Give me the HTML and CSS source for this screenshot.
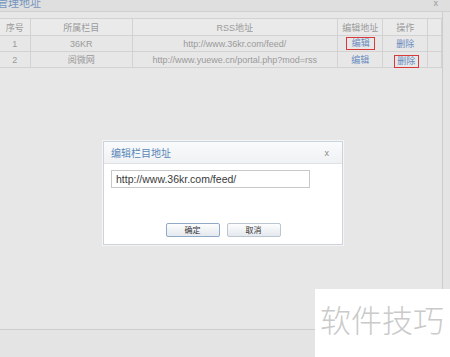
FILE: index.html
```html
<!DOCTYPE html>
<html lang="zh-CN">
<head>
    <meta charset="UTF-8">
    <title>管理地址</title>
    <link rel="stylesheet" href="styles.css">
</head>
<body>
    <div class="panel-head">
        <span class="panel-title">管理地址</span>
        <span class="panel-close">x</span>
    </div>

    <div class="panel-body">
        <table class="grid">
            <tr>
                <th class="c-no">序号</th>
                <th class="c-cat">所属栏目</th>
                <th class="c-url">RSS地址</th>
                <th class="c-edit">编辑地址</th>
                <th class="c-op">操作</th>
                <th class="c-pad"></th>
            </tr>
            <tr>
                <td>1</td>
                <td>36KR</td>
                <td>http://www.36kr.com/feed/</td>
                <td><a class="link mark">编辑</a></td>
                <td><a class="link">删除</a></td>
                <td></td>
            </tr>
            <tr>
                <td>2</td>
                <td>阅微网</td>
                <td>http://www.yuewe.cn/portal.php?mod=rss</td>
                <td><a class="link">编辑</a></td>
                <td><a class="link mark-low">删除</a></td>
                <td></td>
            </tr>
        </table>
    </div>

    <!-- edit dialog over the list -->
    <div class="dialog">
        <div class="dialog-head">
            <span class="dialog-title">编辑栏目地址</span>
            <span class="dialog-close">x</span>
        </div>
        <div class="dialog-body">
            <input type="text" class="url-input" value="http://www.36kr.com/feed/">
            <div class="dialog-buttons">
                <button class="btn btn-ok">确定</button>
                <button class="btn">取消</button>
            </div>
        </div>
    </div>

    <div class="watermark">软件技巧</div>
</body>
</html>
```

FILE: styles.css
```css
body {
    margin: 0;
    width: 450px;
    height: 357px;
    overflow: hidden;
    position: relative;
    background: #e4e4e4;
    font-family: "Liberation Sans", "Noto Sans CJK SC", sans-serif;
}

.panel-head {
    height: 11px;
    display: flex;
    justify-content: space-between;
    align-items: flex-start;
    overflow: hidden;
    background: #dfdfdf;
    border-bottom: 1px solid #d0d0d0;
}

.panel-title {
    margin: -3px 0 0 -3px;
    font-size: 11px;
    line-height: 13px;
    color: #7596c0;
}

.panel-close {
    margin: -2px 12px 0 0;
    font-size: 9px;
    line-height: 11px;
    color: #9a9a9a;
}

.panel-body {
    width: 442px;
    height: 311px;
    padding-top: 6px;
    background: #e7e7e7;
    border-right: 1px solid #cdcdcd;
    border-bottom: 1px solid #cdcdcd;
}

.grid {
    width: 443px;
    margin-left: -1px;
    border-collapse: collapse;
    font-size: 9px;
    color: #9a9a9a;
}

.grid th,
.grid td {
    height: 15px;
    padding: 0;
    text-align: center;
    font-weight: normal;
    border: 1px solid #d2d2d2;
}

.grid th {
    height: 16px;
    background: #eaeaea;
}

.c-no { width: 30px; }
.c-cat { width: 102px; }
.c-url { width: 205px; }
.c-edit { width: 45px; }
.c-op { width: 44px; }
.c-pad { width: 13px; }

.link {
    color: #6a8bc0;
}

/* red marks drawn over the two links */
.mark,
.mark-low {
    display: inline-block;
    line-height: 11px;
    outline: 1px solid #d83a3a;
}

.mark {
    padding: 0 4px 0 5px;
}

.mark-low {
    padding: 0 3px 0 2px;
    margin-left: 3px;
    position: relative;
    top: 2px;
}

.dialog {
    position: absolute;
    left: 103px;
    top: 141px;
    width: 238px;
    height: 102px;
    background: #fff;
    border: 1px solid #cbd3db;
    box-shadow: 0 0 0 1px rgba(255, 255, 255, 0.6);
}

.dialog-head {
    height: 21px;
    display: flex;
    justify-content: space-between;
    align-items: center;
    padding: 0 13px 0 7px;
    background: linear-gradient(#fafbfc, #eff1f3);
    border-bottom: 1px solid #dde2e7;
}

.dialog-title {
    font-size: 10px;
    color: #5886b9;
}

.dialog-close {
    font-size: 9px;
    color: #8a8a8a;
}

.dialog-body {
    padding: 5px 7px 0;
}

.url-input {
    box-sizing: border-box;
    width: 199px;
    height: 18px;
    padding: 0 4px;
    border: 1px solid #c8c8c8;
    font-family: "Liberation Sans", sans-serif;
    font-size: 10.5px;
    color: #3a3a3a;
}

.dialog-buttons {
    display: flex;
    justify-content: center;
    gap: 7px;
    margin-top: 35px;
}

.btn {
    box-sizing: border-box;
    width: 54px;
    height: 14px;
    padding: 0;
    font-family: "Noto Sans CJK SC", sans-serif;
    font-size: 8px;
    line-height: 12px;
    color: #333;
    background: linear-gradient(#fdfdfd, #e4e9ee);
    border: 1px solid #bcc6d0;
    border-radius: 2px;
}

.btn-ok {
    border-color: #8eaac6;
}

.watermark {
    position: absolute;
    left: 315px;
    top: 289px;
    width: 135px;
    height: 68px;
    padding: 13px 0 0 5px;
    box-sizing: border-box;
    background: #fff;
    font-family: "Noto Sans CJK SC", sans-serif;
    font-size: 31px;
    font-weight: 300;
    line-height: 34px;
    color: #cacaca;
    white-space: nowrap;
}
```
